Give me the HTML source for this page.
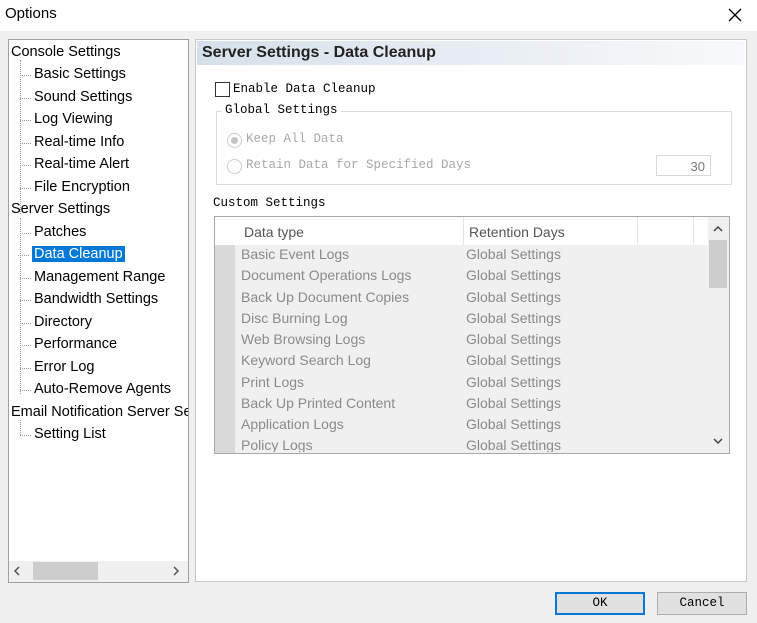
<!DOCTYPE html>
<html><head><style>
body{margin:0;width:757px;height:623px;background:#f0f0f0;position:relative;overflow:hidden;font-family:"Liberation Sans",sans-serif;}
.a{position:absolute;}
.mono{font-family:"Liberation Mono",monospace;font-size:12.5px;}
.tree div{position:absolute;font-size:14.5px;color:#000;white-space:nowrap;}
.tree .c{left:34px}
.tree .c:before{content:"";position:absolute;left:-14px;top:9px;width:11px;border-top:1px dotted #999;}
.row{position:absolute;left:241px;font-size:14px;color:#8a8a8a;white-space:nowrap;}
</style></head><body>
<div class="a" style="left:0;top:0;width:757px;height:31px;background:#fff;"></div>
<div class="a" style="left:5px;top:5px;font-size:15px;">Options</div>
<svg class="a" style="left:728px;top:8px" width="14" height="14"><path d="M1 1L13 13M13 1L1 13" stroke="#000" stroke-width="1.3"/></svg>

<div class="a tree" style="left:8px;top:39px;width:179px;height:542px;background:#fff;border:1px solid #a0a0a0;overflow:hidden;">
<div class="a" style="left:11px;top:20px;height:154px;border-left:1px dotted #999;"></div>
<div class="a" style="left:11px;top:178px;height:176px;border-left:1px dotted #999;"></div>
<div class="a" style="left:11px;top:380px;height:15px;border-left:1px dotted #999;"></div>
<div style="left:2px;top:4px">Console Settings</div>
<div class="c" style="left:25px;top:26px">Basic Settings</div>
<div class="c" style="left:25px;top:49px">Sound Settings</div>
<div class="c" style="left:25px;top:71px">Log Viewing</div>
<div class="c" style="left:25px;top:94px">Real-time Info</div>
<div class="c" style="left:25px;top:116px">Real-time Alert</div>
<div class="c" style="left:25px;top:139px">File Encryption</div>
<div style="left:2px;top:161px">Server Settings</div>
<div class="c" style="left:25px;top:184px">Patches</div>
<div class="c" style="left:25px;top:206px;background:#0078d7;color:#fff;padding:0 2px;left:23px">Data Cleanup</div>
<div class="c" style="left:25px;top:229px">Management Range</div>
<div class="c" style="left:25px;top:251px">Bandwidth Settings</div>
<div class="c" style="left:25px;top:274px">Directory</div>
<div class="c" style="left:25px;top:296px">Performance</div>
<div class="c" style="left:25px;top:319px">Error Log</div>
<div class="c" style="left:25px;top:341px">Auto-Remove Agents</div>
<div style="left:2px;top:364px">Email Notification Server Settings</div>
<div class="c" style="left:25px;top:386px">Setting List</div>
<div class="a" style="left:0;top:521px;width:179px;height:21px;background:#f0f0f0;"></div>
<div class="a" style="left:24px;top:522px;width:65px;height:18px;background:#cdcdcd;"></div>
<svg class="a" style="left:4px;top:526px" width="8" height="10"><path d="M6 1L2 5L6 9" stroke="#555" stroke-width="1.5" fill="none"/></svg>
<svg class="a" style="left:163px;top:526px" width="8" height="10"><path d="M2 1L6 5L2 9" stroke="#555" stroke-width="1.5" fill="none"/></svg>
</div>

<div class="a" style="left:195px;top:39px;width:550px;height:541px;background:#fff;border:1px solid #c8c8c8;"></div>
<div class="a" style="left:197px;top:41px;width:548px;height:24px;background:linear-gradient(90deg,#d6e0ea,#eef2f6 70%,#f8f9fb);"></div>
<div class="a" style="left:202px;top:44px;font-size:16px;font-weight:bold;color:#222;">Server Settings - Data Cleanup</div>

<div class="a" style="left:215px;top:82px;width:13px;height:13px;border:1px solid #333;background:#fff;"></div>
<div class="a mono" style="left:233px;top:82px;">Enable Data Cleanup</div>
<div class="a" style="left:216px;top:111px;width:514px;height:72px;border:1px solid #dcdcdc;"></div>
<div class="a mono" style="left:222px;top:103px;background:#fff;padding:0 3px;">Global Settings</div>
<div class="a" style="left:227px;top:133px;width:13px;height:13px;border:1px solid #ccc;border-radius:50%;background:#fff;"><div class="a" style="left:3px;top:3px;width:7px;height:7px;border-radius:50%;background:#c4c4c4"></div></div>
<div class="a mono" style="left:246px;top:132px;color:#a8a8a8;">Keep All Data</div>
<div class="a" style="left:227px;top:159px;width:13px;height:13px;border:1px solid #ccc;border-radius:50%;background:#fff;"></div>
<div class="a mono" style="left:246px;top:158px;color:#a8a8a8;">Retain Data for Specified Days</div>
<div class="a" style="left:656px;top:155px;height:21px;border:1px solid #d8d8d8;font-size:13px;color:#777;text-align:right;line-height:21px;box-sizing:border-box;padding-right:5px;width:55px;">30</div>

<div class="a mono" style="left:213px;top:196px;">Custom Settings</div>
<div class="a" style="left:214px;top:216px;width:516px;height:238px;border:1px solid #a8a8a8;box-sizing:border-box;background:#fff;overflow:hidden;">
<div class="a" style="left:0;top:28px;width:493px;height:210px;background:#f0f0f0;"></div>
<div class="a" style="left:0;top:28px;width:20px;height:210px;background:#dadada;"></div>
<div class="a" style="left:248px;top:0;height:28px;border-left:1px solid #e5e5e5;"></div>
<div class="a" style="left:422px;top:0;height:28px;border-left:1px solid #e5e5e5;"></div>
<div class="a" style="left:478px;top:0;height:28px;border-left:1px solid #e5e5e5;"></div>
</div>
<div class="a" style="left:708px;top:217px;width:21px;height:236px;background:#f0f0f0;"></div>
<div class="a" style="left:709px;top:240px;width:18px;height:48px;background:#cdcdcd;"></div>
<svg class="a" style="left:713px;top:225px" width="10" height="7"><path d="M1 6L5 2L9 6" stroke="#444" stroke-width="1.5" fill="none"/></svg>
<svg class="a" style="left:713px;top:438px" width="10" height="7"><path d="M1 1L5 5L9 1" stroke="#444" stroke-width="1.5" fill="none"/></svg>
<div class="row" style="left:244px;top:224px;color:#555">Data type</div>
<div class="row" style="left:469px;top:224px;color:#555">Retention Days</div>
<div class="row" style="top:246px">Basic Event Logs</div><div class="row" style="left:466px;top:246px">Global Settings</div>
<div class="row" style="top:267px">Document Operations Logs</div><div class="row" style="left:466px;top:267px">Global Settings</div>
<div class="row" style="top:289px">Back Up Document Copies</div><div class="row" style="left:466px;top:289px">Global Settings</div>
<div class="row" style="top:310px">Disc Burning Log</div><div class="row" style="left:466px;top:310px">Global Settings</div>
<div class="row" style="top:331px">Web Browsing Logs</div><div class="row" style="left:466px;top:331px">Global Settings</div>
<div class="row" style="top:352px">Keyword Search Log</div><div class="row" style="left:466px;top:352px">Global Settings</div>
<div class="row" style="top:374px">Print Logs</div><div class="row" style="left:466px;top:374px">Global Settings</div>
<div class="row" style="top:395px">Back Up Printed Content</div><div class="row" style="left:466px;top:395px">Global Settings</div>
<div class="row" style="top:416px">Application Logs</div><div class="row" style="left:466px;top:416px">Global Settings</div>
<div class="row" style="top:437px;height:15px;overflow:hidden">Policy Logs</div><div class="row" style="left:466px;top:437px;height:15px;overflow:hidden">Global Settings</div>

<div class="a mono" style="left:555px;top:592px;width:90px;height:23px;box-sizing:border-box;border:2px solid #0078d7;background:#e1e1e1;text-align:center;line-height:19px;">OK</div>
<div class="a mono" style="left:657px;top:592px;width:90px;height:23px;box-sizing:border-box;border:1px solid #adadad;background:#e1e1e1;text-align:center;line-height:21px;">Cancel</div>
</body></html>
